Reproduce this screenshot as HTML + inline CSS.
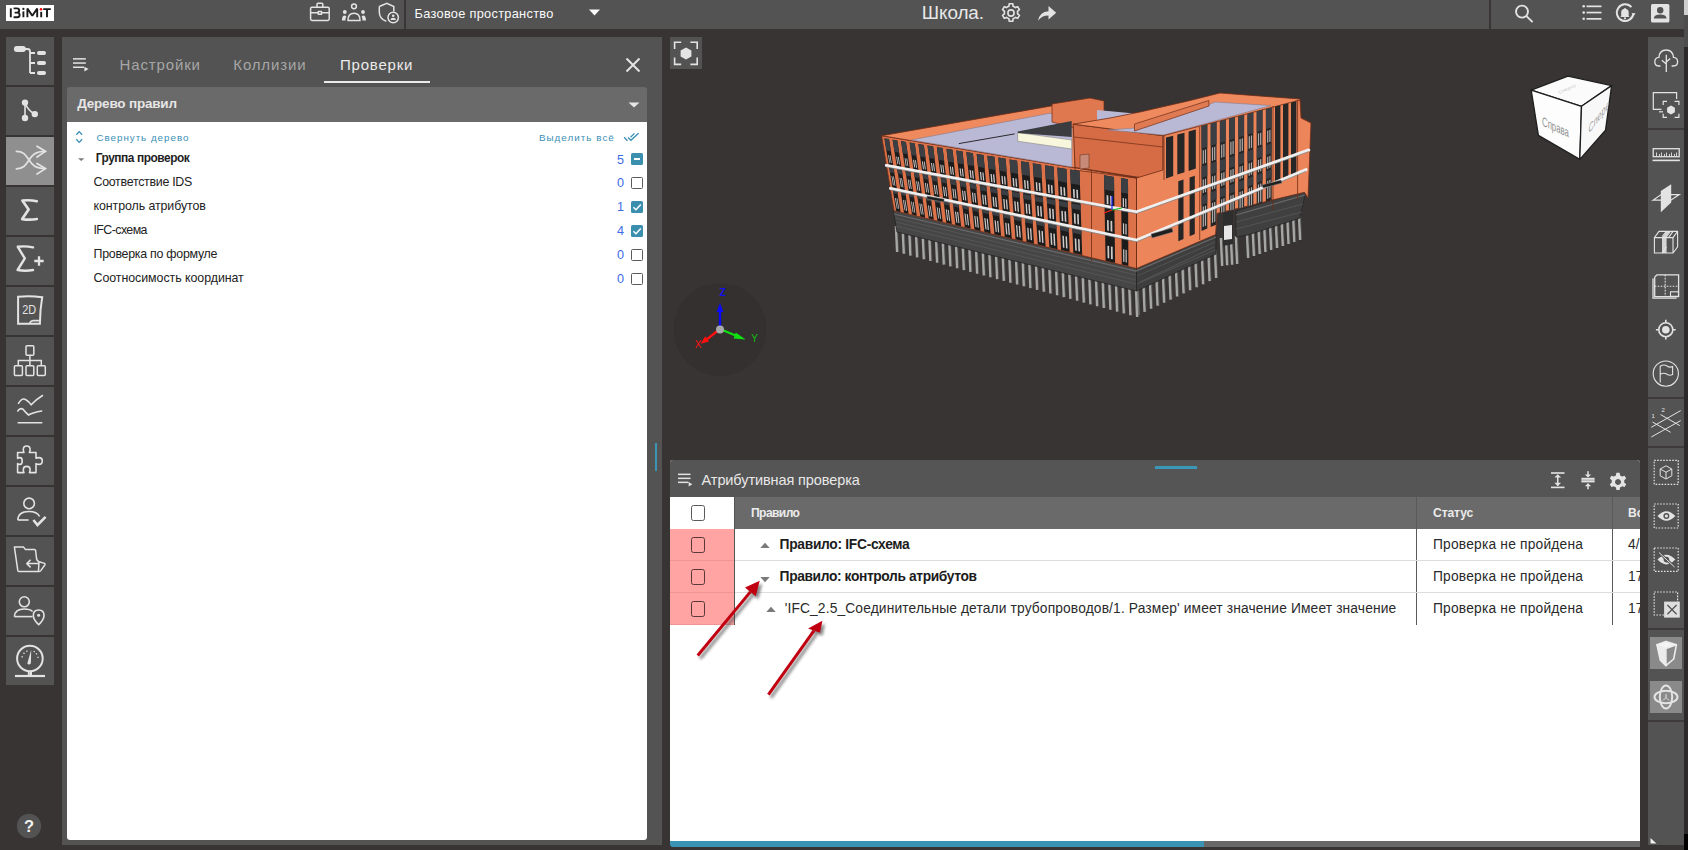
<!DOCTYPE html>
<html><head><meta charset="utf-8">
<style>
*{box-sizing:border-box;margin:0;padding:0}
html,body{width:1688px;height:850px;overflow:hidden;background:#383433;font-family:"Liberation Sans",sans-serif;position:relative}
.a{position:absolute}
.t{position:absolute;white-space:nowrap;line-height:1}
</style></head><body>
<div class="a" style="left:0px;top:0px;width:1684px;height:29px;background:#535353;"></div>
<div class="a" style="left:6px;top:5px;width:48px;height:16px;background:#fff;"></div>
<svg class="a" style="left:6px;top:5px;" width="48" height="16" viewBox="0 0 48 16"><g fill="none" stroke="#1a1a1a" stroke-width="1.9" stroke-linejoin="bevel"><path d="M4.8 3.4 V12.3"/><path d="M7.6 3.4 H10.9 Q13.2 3.4 13.2 5.6 Q13.2 7.6 11 7.6 H8.6 M8.6 7.6 H11.3 Q13.6 7.6 13.6 10 Q13.6 12.3 11.1 12.3 H7.6"/><path d="M17.4 6.4 V12.3"/><path d="M21.4 12.3 V3.4 L26.3 10.8 L31.2 3.4 V12.3"/><path d="M35.2 6.8 V12.3"/><path d="M37.2 4.1 H44.8 M41 4.1 V12.3"/></g><circle cx="17.4" cy="3.9" r="1.1" fill="#1a1a1a"/><circle cx="35" cy="4.3" r="1.25" fill="#f00"/></svg>
<svg class="a" style="left:308px;top:0px;" width="24" height="22" viewBox="0 0 24 22"><g fill="none" stroke="#e3e3e3" stroke-width="1.5" stroke-linejoin="round"><rect x="2.6" y="7.2" width="18.6" height="13.2" rx="1.4"/><path d="M9 7 V4.2 Q9 3.3 10 3.3 H13.8 Q14.8 3.3 14.8 4.2 V7"/><path d="M2.6 12.8 H10.3 M13.5 12.8 H21.2"/><rect x="10.3" y="11.6" width="3.2" height="2.6"/></g></svg>
<svg class="a" style="left:340px;top:0px;" width="28" height="22" viewBox="0 0 28 22"><g fill="#e3e3e3"><circle cx="4.8" cy="12" r="1.9"/><circle cx="23" cy="12" r="1.9"/><path d="M1.9 20.6 Q2 15.6 4.6 15.6 Q5.6 15.6 6.3 16.4 Q5.4 18 5.4 20.6Z"/><path d="M26 20.6 Q25.9 15.6 23.3 15.6 Q22.3 15.6 21.6 16.4 Q22.5 18 22.5 20.6Z"/></g><g fill="none" stroke="#e3e3e3" stroke-width="1.5"><circle cx="14" cy="6.3" r="2.4"/><path d="M8 20.5 Q8 13.3 14 13.3 Q20 13.3 20 20.5 Z"/></g></svg>
<svg class="a" style="left:376px;top:1px;" width="26" height="24" viewBox="0 0 26 24"><g fill="none" stroke="#e3e3e3" stroke-width="1.5"><path d="M3.3 5.5 L10.8 2.2 L17.8 5.5 V10.5"/><path d="M3.3 5.5 V11 Q3.3 18 10.3 20.3"/><circle cx="17.2" cy="16.5" r="5.2"/></g><g fill="#e3e3e3"><circle cx="17.2" cy="14.8" r="1.3"/><path d="M14.4 19 Q14.6 16.8 17.2 16.8 Q19.8 16.8 20 19Z"/></g></svg>
<div class="a" style="left:404px;top:0px;width:2px;height:29px;background:#3a3636;"></div>
<div class="t" style="left:414.60px;top:8.06px;font-size:12.8px;color:#fafafa;font-weight:400;letter-spacing:0.28px;">Базовое пространство</div>
<svg class="a" style="left:588px;top:8px;" width="13" height="9" viewBox="0 0 13 9"><path d="M1 1.5 H12 L6.5 7.5Z" fill="#fafafa"/></svg>
<div class="t" style="left:921.80px;top:4.00px;font-size:18.9px;color:#e8e8e8;font-weight:400;letter-spacing:-0.1px;">Школа.</div>
<svg class="a" style="left:999px;top:1px;" width="24" height="24" viewBox="0 0 24 24"><path fill="none" stroke="#e3e3e3" stroke-width="1.6" d="M10.3 2.8 h3.4 l0.5 2.5 a7 7 0 0 1 2.1 1.2 l2.4-0.8 1.7 2.9 -1.9 1.7 a7 7 0 0 1 0 2.4 l1.9 1.7 -1.7 2.9 -2.4-0.8 a7 7 0 0 1 -2.1 1.2 l-0.5 2.5 h-3.4 l-0.5-2.5 a7 7 0 0 1 -2.1-1.2 l-2.4 0.8 -1.7-2.9 1.9-1.7 a7 7 0 0 1 0-2.4 l-1.9-1.7 1.7-2.9 2.4 0.8 a7 7 0 0 1 2.1-1.2 z"/><circle cx="12" cy="12" r="3.1" fill="none" stroke="#e3e3e3" stroke-width="1.6"/></svg>
<svg class="a" style="left:1036px;top:3px;" width="22" height="20" viewBox="0 0 22 20"><path fill="#e3e3e3" d="M2 17.8 Q3.5 9 12.5 8.3 V3 L20.2 9.8 L12.5 16.6 V12.6 Q6 12.4 2 17.8Z"/></svg>
<div class="a" style="left:1489px;top:0px;width:2px;height:29px;background:#3a3636;"></div>
<svg class="a" style="left:1512px;top:2px;" width="24" height="24" viewBox="0 0 24 24"><g fill="none" stroke="#e3e3e3" stroke-width="1.9"><circle cx="10" cy="9.6" r="6"/><path d="M14.2 13.8 L20.6 20.2"/></g></svg>
<svg class="a" style="left:1580px;top:3px;" width="24" height="20" viewBox="0 0 24 20"><g fill="#e3e3e3"><circle cx="3.7" cy="3.3" r="1.3"/><circle cx="3.7" cy="9.6" r="1.3"/><circle cx="3.7" cy="15.8" r="1.3"/><rect x="6.5" y="2.5" width="15" height="1.7"/><rect x="6.5" y="8.7" width="15" height="1.7"/><rect x="6.5" y="15" width="15" height="1.7"/></g></svg>
<svg class="a" style="left:1614px;top:2px;" width="24" height="22" viewBox="0 0 24 22"><g fill="none" stroke="#e3e3e3" stroke-width="2"><path d="M19.4 11.4 A8.3 8.3 0 1 1 17.4 5.2"/></g><path fill="#e3e3e3" d="M17.5 11.2 h4.2 l-2.1 2.9z"/><path fill="#e3e3e3" d="M7.2 14.2 V10.4 Q7.2 7.3 10.3 6.7 V6 h1.3 v0.7 Q14.7 7.3 14.7 10.4 V14.2 L15.7 15.1 H6.2Z"/><circle cx="11" cy="16.3" r="1.1" fill="#e3e3e3"/></svg>
<svg class="a" style="left:1649px;top:2px;" width="22" height="22" viewBox="0 0 22 22"><rect x="2" y="2" width="18.4" height="18.6" rx="1.6" fill="#e3e3e3"/><circle cx="11.2" cy="8.2" r="3.2" fill="#535353"/><path d="M4.8 16.6 Q5 12.6 11.2 12.6 Q17.4 12.6 17.6 16.6Z" fill="#535353"/></svg>
<div class="a" style="left:1684px;top:0px;width:4px;height:15px;background:#cfcfcf;"></div>
<div class="a" style="left:1684px;top:15px;width:4px;height:32px;background:#4d4d4d;"></div>
<div class="a" style="left:1684px;top:47px;width:4px;height:787px;background:#2b2929;"></div>
<div class="a" style="left:1684px;top:834px;width:4px;height:16px;background:#000;"></div>
<div class="a" style="left:6px;top:37px;width:48px;height:48px;background:#535353;"></div>
<svg class="a" style="left:6px;top:37px;" width="48" height="48" viewBox="0 0 48 48"><rect x="7.9" y="9.1" width="12" height="6" rx="3" fill="#e3e3e3"/><path d="M19 12 H21.5 Q24 12 24 14.5 V36 M24 16 H29 M24 26 H29 M24 36 H29" fill="none" stroke="#e3e3e3" stroke-width="1.8"/><rect x="31" y="14" width="9" height="4" rx="2" fill="#e3e3e3"/><rect x="31" y="24" width="9" height="4" rx="2" fill="#e3e3e3"/><rect x="31" y="34" width="9" height="4" rx="2" fill="#e3e3e3"/></svg>
<div class="a" style="left:6px;top:87px;width:48px;height:48px;background:#535353;"></div>
<svg class="a" style="left:6px;top:87px;" width="48" height="48" viewBox="0 0 48 48"><g fill="#e3e3e3"><circle cx="19" cy="15.6" r="3.2"/><circle cx="19" cy="31" r="3.2"/><circle cx="28.8" cy="27.1" r="3.2"/></g><path d="M19 15.6 V31 M19 15.6 Q22 24 28.8 27.1" fill="none" stroke="#e3e3e3" stroke-width="1.6"/></svg>
<div class="a" style="left:6px;top:137px;width:48px;height:48px;background:#8f8f8f;"></div>
<svg class="a" style="left:6px;top:137px;" width="48" height="48" viewBox="0 0 48 48"><g fill="none" stroke="#e3e3e3" stroke-width="1.7" stroke-linecap="round"><path d="M10.4 14.3 C18 14.3 20 18.5 23 23 S29 31.6 39.2 31.6"/><path d="M10.4 31.8 C18 31.8 20 27.5 23 23 S29 14.4 39.2 14.4"/><path d="M31 9.2 L39.5 14.4 L31 20"/><path d="M31 26.4 L39.5 31.6 L31 37"/></g></svg>
<div class="a" style="left:6px;top:187px;width:48px;height:48px;background:#535353;"></div>
<svg class="a" style="left:6px;top:187px;" width="48" height="48" viewBox="0 0 48 48"><path d="M30.8 14.2 Q24 12.8 16.4 13.5 L22.6 22.6 L16.2 32.1 Q24 33.2 30.8 32" fill="none" stroke="#e3e3e3" stroke-width="2.7" stroke-linejoin="round" stroke-linecap="round"/></svg>
<div class="a" style="left:6px;top:237px;width:48px;height:48px;background:#535353;"></div>
<svg class="a" style="left:6px;top:237px;" width="48" height="48" viewBox="0 0 48 48"><path d="M27 10.4 Q19.5 8.8 11.8 9.8 L18.8 21.4 L11.6 33 Q19.5 34.4 27 33" fill="none" stroke="#e3e3e3" stroke-width="2.4" stroke-linejoin="round" stroke-linecap="round"/><path d="M33 19.3 V28.7 M28.3 24 H37.7" stroke="#e3e3e3" stroke-width="2.3"/></svg>
<div class="a" style="left:6px;top:287px;width:48px;height:48px;background:#535353;"></div>
<svg class="a" style="left:6px;top:287px;" width="48" height="48" viewBox="0 0 48 48"><path d="M12.1 9.7 Q24 8.4 36.2 10.2 Q34 23 33.9 36.7 H12.1 Z" fill="none" stroke="#e3e3e3" stroke-width="2"/><path d="M23.7 36 Q25 33.6 27 33.6 H33.6" fill="none" stroke="#e3e3e3" stroke-width="1.6"/><text x="0" y="0" font-size="12.7" fill="#e3e3e3" text-anchor="middle" font-family="Liberation Sans" transform="translate(23.1,26.8) scale(0.86,1)">2D</text></svg>
<div class="a" style="left:6px;top:337px;width:48px;height:48px;background:#535353;"></div>
<svg class="a" style="left:6px;top:337px;" width="48" height="48" viewBox="0 0 48 48"><g fill="none" stroke="#e3e3e3" stroke-width="1.5"><rect x="20" y="8.7" width="7.8" height="9.6" rx="1"/><rect x="8.4" y="28.7" width="8" height="9.8" rx="1"/><rect x="20" y="28.7" width="7.8" height="9.8" rx="1"/><rect x="31.3" y="28.7" width="8" height="9.8" rx="1"/><path d="M23.9 18.3 V28.7 M12.3 28.7 V23.5 H35.3 V28.7"/></g></svg>
<div class="a" style="left:6px;top:387px;width:48px;height:48px;background:#535353;"></div>
<svg class="a" style="left:6px;top:387px;" width="48" height="48" viewBox="0 0 48 48"><g fill="none" stroke="#e3e3e3" stroke-width="1.6" stroke-linecap="round"><path d="M12.5 16.3 Q16 10.5 19.5 12.5 Q23 14.6 25.2 17.8 Q30 12.5 36.5 8.5"/><path d="M11.8 24 Q14 20.4 17 22.2 Q20 26 22.6 28 Q27 25.4 35.7 24"/><path d="M12.2 35.7 H35.7"/></g></svg>
<div class="a" style="left:6px;top:437px;width:48px;height:48px;background:#535353;"></div>
<svg class="a" style="left:6px;top:437px;" width="48" height="48" viewBox="0 0 48 48"><path d="M11.6 15.5 H18 Q17.3 14.5 17.3 12.6 Q17.3 9 20.7 9 Q24.1 9 24.1 12.6 Q24.1 14.5 23.4 15.5 H30 V21.3 Q31 20.6 32.8 20.6 Q36.3 20.6 36.3 24 Q36.3 27.4 32.8 27.4 Q31 27.4 30 26.7 V35.6 H23.4 Q24.1 34.6 24.1 32.8 Q24.1 29.4 20.7 29.4 Q17.3 29.4 17.3 32.8 Q17.3 34.6 18 35.6 H11.6 V26.6 Q12.5 27.4 14.1 27.4 Q16.2 27.4 16.2 24 Q16.2 20.6 14.1 20.6 Q12.5 20.6 11.6 21.3Z" fill="none" stroke="#e3e3e3" stroke-width="1.6" stroke-linejoin="round"/></svg>
<div class="a" style="left:6px;top:487px;width:48px;height:48px;background:#535353;"></div>
<svg class="a" style="left:6px;top:487px;" width="48" height="48" viewBox="0 0 48 48"><g fill="none" stroke="#e3e3e3" stroke-width="1.6"><circle cx="23.1" cy="16.4" r="5.3"/><path d="M11.8 33 Q12.2 24.5 23 24.5 Q31 24.5 33.6 29.5"/><path d="M11.8 33 H22.6"/></g><path d="M27.4 33 L31.5 38 L39.6 29.8" fill="none" stroke="#e3e3e3" stroke-width="2.6"/></svg>
<div class="a" style="left:6px;top:537px;width:48px;height:48px;background:#535353;"></div>
<svg class="a" style="left:6px;top:537px;" width="48" height="48" viewBox="0 0 48 48"><g fill="none" stroke="#e3e3e3" stroke-width="1.5" stroke-linejoin="round"><path d="M8.4 10.1 H17.6 L19.3 12.4 H28.4 Q29.5 12.4 29.6 13.5 L30.6 22 Q31 24 33 24.8 L38.6 26.4 Q39.4 27 38.8 28 L34.8 33.6 Q34 34.6 32.6 34.6 H13.2 Q12.2 34.6 11.8 33.4 Z"/><path d="M33 24.8 L32.4 34.4"/><path d="M33 26.6 H21 M24.6 22.8 L20.8 26.6 L24.6 30.4"/></g></svg>
<div class="a" style="left:6px;top:587px;width:48px;height:48px;background:#535353;"></div>
<svg class="a" style="left:6px;top:587px;" width="48" height="48" viewBox="0 0 48 48"><g fill="none" stroke="#e3e3e3" stroke-width="1.6"><circle cx="18.3" cy="14.8" r="5"/><path d="M8.4 29.6 Q8.8 22 18.3 22 Q24 22 26.6 24.5"/><path d="M8.4 29.6 H26.5"/><path d="M32.7 37.6 Q27.3 32.5 27.3 28.4 Q27.3 23 32.7 23 Q38 23 38 28.4 Q38 32.5 32.7 37.6Z"/></g><circle cx="32.6" cy="28.2" r="1.5" fill="#e3e3e3"/></svg>
<div class="a" style="left:6px;top:637px;width:48px;height:48px;background:#535353;"></div>
<svg class="a" style="left:6px;top:637px;" width="48" height="48" viewBox="0 0 48 48"><g fill="none" stroke="#e3e3e3" stroke-width="2"><circle cx="23.9" cy="21.5" r="12.8"/><path d="M9 39 H39" stroke-width="2.2"/><path d="M22.8 34.3 V38 M25 34.3 V38"/></g><path d="M21.3 26.4 Q23 28.7 24.9 26.2 L25.2 12.8 Z" fill="#e3e3e3"/><g stroke="#e3e3e3" stroke-width="1.3"><path d="M15.5 19.5 l1.3 0.6 M17.5 15.8 l1 1 M20.6 13.6 l0.6 1.2 M28.5 14 l-0.7 1.1 M31 16.4 l-1 0.8 M32.7 20 l-1.3 0.5"/></g></svg>
<svg class="a" style="left:16px;top:813px;" width="26" height="26" viewBox="0 0 26 26"><circle cx="13" cy="13" r="12.2" fill="#535353"/><text x="13" y="18.6" font-size="16.5" font-weight="bold" fill="#f2f2f2" text-anchor="middle" font-family="Liberation Sans">?</text></svg>
<div class="a" style="left:62px;top:37px;width:600px;height:808px;background:#535353;"></div>
<svg class="a" style="left:70px;top:54px;" width="22" height="20" viewBox="0 0 22 20"><g fill="#e3e3e3"><rect x="3" y="4.1" width="12.8" height="1.5"/><rect x="3" y="8.3" width="12.8" height="1.5"/><rect x="3" y="12.5" width="11" height="1.5"/><path d="M14.4 12.7 L18.6 15.1 L14.4 17.5Z"/></g></svg>
<div class="t" style="left:119.60px;top:57.00px;font-size:15px;color:#a6a6a6;font-weight:400;letter-spacing:0.85px;">Настройки</div>
<div class="t" style="left:233.30px;top:57.00px;font-size:15px;color:#a6a6a6;font-weight:400;letter-spacing:0.85px;">Коллизии</div>
<div class="t" style="left:340.00px;top:57.00px;font-size:15px;color:#ebebeb;font-weight:400;letter-spacing:0.8px;">Проверки</div>
<div class="a" style="left:324px;top:81px;width:106px;height:2.4px;background:#ebebeb;"></div>
<svg class="a" style="left:624px;top:56px;" width="18" height="18" viewBox="0 0 18 18"><path d="M2.5 2.5 L15.5 15.5 M15.5 2.5 L2.5 15.5" stroke="#e3e3e3" stroke-width="2"/></svg>
<div class="a" style="left:67px;top:87px;width:580px;height:35px;background:#6a6a6a;border-radius:3px 3px 0 0;"></div>
<div class="t" style="left:77.20px;top:96.97px;font-size:13.5px;color:#e6e6e6;font-weight:700;letter-spacing:-0.2px;">Дерево правил</div>
<svg class="a" style="left:627px;top:101px;" width="14" height="8" viewBox="0 0 14 8"><path d="M1.5 1.5 H12.5 L7 6.5Z" fill="#e6e6e6"/></svg>
<div class="a" style="left:67px;top:122px;width:580px;height:718px;background:#fff;border-radius:0 0 3px 3px;"></div>
<svg class="a" style="left:72px;top:128px;" width="14" height="18" viewBox="0 0 14 18"><path d="M4.3 6.8 L7.2 3.6 L10.1 6.8 M4.3 11.2 L7.2 14.4 L10.1 11.2" fill="none" stroke="#3a8fb5" stroke-width="1.3"/></svg>
<div class="t" style="left:96.40px;top:132.50px;font-size:9.8px;color:#3a8fb5;font-weight:400;letter-spacing:0.98px;">Свернуть дерево</div>
<div class="t" style="left:538.90px;top:132.50px;font-size:9.8px;color:#3a8fb5;font-weight:400;letter-spacing:1.05px;">Выделить всё</div>
<svg class="a" style="left:622px;top:131px;" width="18" height="12" viewBox="0 0 18 12"><path d="M2.1 6.3 L5.5 9.7 M6 6.5 L8.9 9.3 L16.6 2.3 M8.5 6.3 L12.5 2.4" fill="none" stroke="#3a8fb5" stroke-width="1.3"/></svg>
<svg class="a" style="left:76px;top:155px;" width="10" height="8" viewBox="0 0 10 8"><path d="M2 3.2 H8.4 L5.2 6Z" fill="#7a7a7a"/></svg>
<div class="t" style="left:95.70px;top:153.13px;font-size:11.9px;color:#1e1e1e;font-weight:700;letter-spacing:-0.44px;">Группа проверок</div>
<div class="t" style="left:617.00px;top:153.63px;font-size:12.6px;color:#3d6be6;font-weight:400;letter-spacing:0px;">5</div>
<div class="a" style="left:631px;top:153px;width:12px;height:12px;background:#3a8fae;border-radius:1.5px;"></div>
<div class="a" style="left:633.8px;top:158px;width:6.7px;height:2.2px;background:#fff;"></div>
<div class="t" style="left:93.50px;top:175.50px;font-size:12.4px;color:#222;font-weight:400;letter-spacing:-0.28px;">Соответствие IDS</div>
<div class="t" style="left:617.00px;top:177.33px;font-size:12.6px;color:#3d6be6;font-weight:400;letter-spacing:0px;">0</div>
<div class="a" style="left:631px;top:177px;width:12px;height:12px;background:#fff;border:1.4px solid #5a5a5a;border-radius:1.5px;"></div>
<div class="t" style="left:93.50px;top:199.50px;font-size:12.4px;color:#222;font-weight:400;letter-spacing:-0.08px;">контроль атрибутов</div>
<div class="t" style="left:617.00px;top:201.33px;font-size:12.6px;color:#3d6be6;font-weight:400;letter-spacing:0px;">1</div>
<div class="a" style="left:631px;top:201px;width:12px;height:12px;background:#3a8fae;border-radius:1.5px;"></div>
<svg class="a" style="left:631px;top:201px;" width="12" height="12" viewBox="0 0 12 12"><path d="M2.4 6.2 L4.9 8.7 L9.8 3.6" fill="none" stroke="#fff" stroke-width="1.5"/></svg>
<div class="t" style="left:93.50px;top:223.50px;font-size:12.4px;color:#222;font-weight:400;letter-spacing:-0.58px;">IFC-схема</div>
<div class="t" style="left:617.00px;top:225.33px;font-size:12.6px;color:#3d6be6;font-weight:400;letter-spacing:0px;">4</div>
<div class="a" style="left:631px;top:225px;width:12px;height:12px;background:#3a8fae;border-radius:1.5px;"></div>
<svg class="a" style="left:631px;top:225px;" width="12" height="12" viewBox="0 0 12 12"><path d="M2.4 6.2 L4.9 8.7 L9.8 3.6" fill="none" stroke="#fff" stroke-width="1.5"/></svg>
<div class="t" style="left:93.50px;top:247.50px;font-size:12.4px;color:#222;font-weight:400;letter-spacing:-0.26px;">Проверка по формуле</div>
<div class="t" style="left:617.00px;top:249.33px;font-size:12.6px;color:#3d6be6;font-weight:400;letter-spacing:0px;">0</div>
<div class="a" style="left:631px;top:249px;width:12px;height:12px;background:#fff;border:1.4px solid #5a5a5a;border-radius:1.5px;"></div>
<div class="t" style="left:93.50px;top:271.50px;font-size:12.4px;color:#222;font-weight:400;letter-spacing:-0.05px;">Соотносимость координат</div>
<div class="t" style="left:617.00px;top:273.33px;font-size:12.6px;color:#3d6be6;font-weight:400;letter-spacing:0px;">0</div>
<div class="a" style="left:631px;top:273px;width:12px;height:12px;background:#fff;border:1.4px solid #5a5a5a;border-radius:1.5px;"></div>
<div class="a" style="left:655px;top:443px;width:2px;height:28px;background:#3a95b3;"></div>
<div class="a" style="left:670px;top:37px;width:32px;height:32px;background:#535353;"></div>
<svg class="a" style="left:670px;top:37px;" width="32" height="32" viewBox="0 0 32 32"><g fill="none" stroke="#e3e3e3" stroke-width="1.6"><path d="M4.6 12 V5.2 H11.2 M20.4 5.2 H27.2 V12 M27.2 20.6 V27.4 H20.4 M11.2 27.4 H4.6 V20.6"/></g><path d="M16 10.4 L21.4 13.4 V19.4 L16 22.5 L10.6 19.4 V13.4Z" fill="#e3e3e3"/></svg>
<svg class="a" style="left:672px;top:282px;" width="96" height="96" viewBox="0 0 96 96"><circle cx="48" cy="47.5" r="46.3" fill="#33302f"/><path d="M48 47 V28" stroke="#0a0aff" stroke-width="2.4"/><path d="M44.6 30 L48 21 L51.4 30Z" fill="#0a0aff"/><text x="50.6" y="14.2" font-size="10.5" font-weight="bold" fill="#1010ee" text-anchor="middle" font-family="Liberation Sans">Z</text><path d="M48 47 L66 54.5" stroke="#10e010" stroke-width="2.2"/><path d="M63.8 50.4 L73.6 57.6 L61.6 56.4Z" fill="#10e010"/><text x="82.6" y="60" font-size="10" fill="#10c010" text-anchor="middle" font-family="Liberation Sans">Y</text><path d="M48 47 L34 58" stroke="#ff1010" stroke-width="2.4"/><path d="M33.2 54.2 L28.6 61.8 L37 59.4Z" fill="#ff1010"/><text x="26" y="65.6" font-size="10" fill="#ff1010" text-anchor="middle" font-family="Liberation Sans">X</text><circle cx="48" cy="47.4" r="4" fill="#a8a8a8"/></svg>
<svg class="a" style="left:1520px;top:70px;" width="100" height="100" viewBox="0 0 100 100"><defs><clipPath id="cf1"><path d="M11.2 20.1 L61.5 36.3 L59.8 89.4 L18.4 65.4Z"/></clipPath><clipPath id="cf2"><path d="M61.5 36.3 L91.6 15.6 L85.5 60.3 L59.8 89.4Z"/></clipPath></defs><g stroke="#1e1e1e" stroke-width="1.3" stroke-linejoin="round"><path d="M11.2 20.1 L48 6.1 L91.6 15.6 L61.5 36.3Z" fill="#fbfbfb"/><path d="M11.2 20.1 L61.5 36.3 L59.8 89.4 L18.4 65.4Z" fill="#fdfdfd"/><path d="M61.5 36.3 L91.6 15.6 L85.5 60.3 L59.8 89.4Z" fill="#f8f8f8"/></g><g clip-path="url(#cf1)"><text x="0" y="0" font-size="13" fill="#909090" font-family="Liberation Sans" transform="translate(22,55.5) skewY(24) scale(0.6,1)">Справа</text></g><g clip-path="url(#cf2)"><text x="0" y="0" font-size="12" fill="#a0a0a0" font-family="Liberation Sans" transform="translate(68.5,64) skewY(-52) scale(0.6,1)" >Спереди</text></g><text x="0" y="0" font-size="7" fill="#c8c8c8" font-family="Liberation Sans" transform="translate(39,24) rotate(-24) scale(0.8,0.6)">Сверху</text></svg>
<svg class="a" style="left:0;top:0" width="1688" height="850"><g stroke="#a6a6a6" stroke-width="2.6" fill="none"><path d="M896.0 226.0 L897.2 252.0" /><path d="M902.7 227.7 L903.9 253.8" /><path d="M909.3 229.4 L910.5 255.6" /><path d="M916.0 231.1 L917.2 257.4" /><path d="M922.7 232.8 L923.9 259.2" /><path d="M929.3 234.5 L930.5 261.0" /><path d="M936.0 236.2 L937.2 262.8" /><path d="M942.7 237.9 L943.9 264.6" /><path d="M949.3 239.6 L950.5 266.4" /><path d="M956.0 241.2 L957.2 268.2" /><path d="M962.7 242.9 L963.9 270.1" /><path d="M969.3 244.6 L970.5 271.9" /><path d="M976.0 246.3 L977.2 273.7" /><path d="M982.7 248.0 L983.9 275.5" /><path d="M989.3 249.7 L990.5 277.3" /><path d="M996.0 251.4 L997.2 279.1" /><path d="M1002.7 253.1 L1003.9 280.9" /><path d="M1009.3 254.8 L1010.5 282.7" /><path d="M1016.0 256.5 L1017.2 284.5" /><path d="M1022.7 258.2 L1023.9 286.3" /><path d="M1029.3 259.9 L1030.5 288.1" /><path d="M1036.0 261.6 L1037.2 289.9" /><path d="M1042.7 263.3 L1043.9 291.7" /><path d="M1049.3 265.0 L1050.5 293.5" /><path d="M1056.0 266.7 L1057.2 295.3" /><path d="M1062.7 268.4 L1063.9 297.1" /><path d="M1069.3 270.1 L1070.5 298.9" /><path d="M1076.0 271.8 L1077.2 300.8" /><path d="M1082.7 273.4 L1083.9 302.6" /><path d="M1089.3 275.1 L1090.5 304.4" /><path d="M1096.0 276.8 L1097.2 306.2" /><path d="M1102.7 278.5 L1103.9 308.0" /><path d="M1109.3 280.2 L1110.5 309.8" /><path d="M1116.0 281.9 L1117.2 311.6" /><path d="M1122.7 283.6 L1123.9 313.4" /><path d="M1129.3 285.3 L1130.5 315.2" /><path d="M1136.0 287.0 L1137.2 317.0" /><path d="M1137.0 287.0 L1138.2 315.0" /><path d="M1143.5 283.9 L1144.7 311.9" /><path d="M1150.0 280.8 L1151.2 308.8" /><path d="M1156.5 277.8 L1157.7 305.8" /><path d="M1163.0 274.7 L1164.2 302.7" /><path d="M1169.5 271.6 L1170.7 299.6" /><path d="M1176.0 268.5 L1177.2 296.5" /><path d="M1182.5 265.4 L1183.7 293.4" /><path d="M1189.0 262.3 L1190.2 290.3" /><path d="M1195.5 259.2 L1196.7 287.2" /><path d="M1202.0 256.2 L1203.2 284.2" /><path d="M1208.5 253.1 L1209.7 281.1" /><path d="M1215.0 250.0 L1216.2 278.0" /><path d="M1247.0 232.0 L1248.2 258.0" /><path d="M1252.8 230.0 L1254.0 256.0" /><path d="M1258.6 228.0 L1259.8 254.0" /><path d="M1264.3 226.0 L1265.5 252.0" /><path d="M1270.1 224.0 L1271.3 250.0" /><path d="M1275.9 222.0 L1277.1 248.0" /><path d="M1281.7 220.0 L1282.9 246.0" /><path d="M1287.4 218.0 L1288.6 244.0" /><path d="M1293.2 216.0 L1294.4 242.0" /><path d="M1299.0 214.0 L1300.2 240.0" /><path d="M1221.0 238.0 L1222.2 266.0" /><path d="M1226.0 237.3 L1227.2 265.3" /><path d="M1231.0 236.7 L1232.2 264.7" /><path d="M1236.0 236.0 L1237.2 264.0" /></g><g stroke="#555" stroke-width="0.7" fill="none" transform="translate(1.5,0)"><path d="M896.0 226.0 L897.2 252.0" /><path d="M902.7 227.7 L903.9 253.8" /><path d="M909.3 229.4 L910.5 255.6" /><path d="M916.0 231.1 L917.2 257.4" /><path d="M922.7 232.8 L923.9 259.2" /><path d="M929.3 234.5 L930.5 261.0" /><path d="M936.0 236.2 L937.2 262.8" /><path d="M942.7 237.9 L943.9 264.6" /><path d="M949.3 239.6 L950.5 266.4" /><path d="M956.0 241.2 L957.2 268.2" /><path d="M962.7 242.9 L963.9 270.1" /><path d="M969.3 244.6 L970.5 271.9" /><path d="M976.0 246.3 L977.2 273.7" /><path d="M982.7 248.0 L983.9 275.5" /><path d="M989.3 249.7 L990.5 277.3" /><path d="M996.0 251.4 L997.2 279.1" /><path d="M1002.7 253.1 L1003.9 280.9" /><path d="M1009.3 254.8 L1010.5 282.7" /><path d="M1016.0 256.5 L1017.2 284.5" /><path d="M1022.7 258.2 L1023.9 286.3" /><path d="M1029.3 259.9 L1030.5 288.1" /><path d="M1036.0 261.6 L1037.2 289.9" /><path d="M1042.7 263.3 L1043.9 291.7" /><path d="M1049.3 265.0 L1050.5 293.5" /><path d="M1056.0 266.7 L1057.2 295.3" /><path d="M1062.7 268.4 L1063.9 297.1" /><path d="M1069.3 270.1 L1070.5 298.9" /><path d="M1076.0 271.8 L1077.2 300.8" /><path d="M1082.7 273.4 L1083.9 302.6" /><path d="M1089.3 275.1 L1090.5 304.4" /><path d="M1096.0 276.8 L1097.2 306.2" /><path d="M1102.7 278.5 L1103.9 308.0" /><path d="M1109.3 280.2 L1110.5 309.8" /><path d="M1116.0 281.9 L1117.2 311.6" /><path d="M1122.7 283.6 L1123.9 313.4" /><path d="M1129.3 285.3 L1130.5 315.2" /><path d="M1136.0 287.0 L1137.2 317.0" /><path d="M1137.0 287.0 L1138.2 315.0" /><path d="M1143.5 283.9 L1144.7 311.9" /><path d="M1150.0 280.8 L1151.2 308.8" /><path d="M1156.5 277.8 L1157.7 305.8" /><path d="M1163.0 274.7 L1164.2 302.7" /><path d="M1169.5 271.6 L1170.7 299.6" /><path d="M1176.0 268.5 L1177.2 296.5" /><path d="M1182.5 265.4 L1183.7 293.4" /><path d="M1189.0 262.3 L1190.2 290.3" /><path d="M1195.5 259.2 L1196.7 287.2" /><path d="M1202.0 256.2 L1203.2 284.2" /><path d="M1208.5 253.1 L1209.7 281.1" /><path d="M1215.0 250.0 L1216.2 278.0" /><path d="M1247.0 232.0 L1248.2 258.0" /><path d="M1252.8 230.0 L1254.0 256.0" /><path d="M1258.6 228.0 L1259.8 254.0" /><path d="M1264.3 226.0 L1265.5 252.0" /><path d="M1270.1 224.0 L1271.3 250.0" /><path d="M1275.9 222.0 L1277.1 248.0" /><path d="M1281.7 220.0 L1282.9 246.0" /><path d="M1287.4 218.0 L1288.6 244.0" /><path d="M1293.2 216.0 L1294.4 242.0" /><path d="M1299.0 214.0 L1300.2 240.0" /><path d="M1221.0 238.0 L1222.2 266.0" /><path d="M1226.0 237.3 L1227.2 265.3" /><path d="M1231.0 236.7 L1232.2 264.7" /><path d="M1236.0 236.0 L1237.2 264.0" /></g><polygon points="893.0,209.0 1136.5,266.0 1136.5,291.0 897.0,232.0" fill="#464646" stroke="#262626" stroke-width="0.8"/><polygon points="1136.5,266.0 1216.0,232.0 1216.0,254.0 1136.5,291.0" fill="#3e3e3e" stroke="#262626" stroke-width="0.8"/><polygon points="1236.0,211.0 1306.0,190.0 1300.0,218.0 1248.0,235.0 1236.0,237.0" fill="#404040" stroke="#262626" stroke-width="0.8"/><path d="M894 214 L1136 271 L1216 237 M1236 215 L1305 195" stroke="#6a6a6a" stroke-width="1.2" fill="none"/><path d="M896 222 L1136 280 M1140 282 L1214 247" stroke="#555" stroke-width="1" fill="none"/><g stroke="#5c5c5c" stroke-width="0.7" fill="none"><path d="M895 218 L1136 275"/><path d="M896 226 L1136 284"/><path d="M1137 276 L1215 242"/><path d="M1137 284 L1215 250"/><path d="M1236 222 L1303 204"/><path d="M1236 229 L1302 212"/></g><polygon points="1223,212 1233,210 1233,244 1223,246" fill="#2e2e2e"/><polygon points="1224,226 1232,225 1232,239 1224,240" fill="#e6e6e6"/><polygon points="881.6,135.7 1136.5,178.0 1136.5,268.5 894.0,210.7" fill="#dc7249" stroke="#6e2c16" stroke-width="0.8"/><polygon points="881.6,135.7 1051.0,106.0 1075.0,110.0 1075.0,170.0 1136.5,178.0" fill="#ef8a5e" stroke="#6e2c16" stroke-width="0.8"/><polygon points="911.4,140.0 1050.0,113.2 1072.0,121.7 1072.0,167.0" fill="#b9b9d6" stroke="#8a7a8a" stroke-width="0.6"/><polygon points="1052,104 1090,98 1104,101 1104,124 1075,128 1052,122" fill="#df784f" stroke="#6e2c16" stroke-width="0.7"/><polygon points="1097,110 1140,114 1140,124 1097,121" fill="#b9b9d6"/><polygon points="1017.7,132.6 1071.7,140 1071.7,149 1017.7,141.2" fill="#f8f6dc" stroke="#777" stroke-width="0.5"/><polygon points="1017.7,131.4 1071.7,121.1 1071.7,137 1017.7,133" fill="#3a3c40"/><path d="M958.8 143.6 L1014.7 133.9" stroke="#1a1a1a" stroke-width="0.9"/><polygon points="1073.2,124.2 1163.1,135.7 1163.1,179.7 1136.5,177.0 1075.0,167.5" fill="#d56c45" stroke="#6e2c16" stroke-width="0.9"/><path d="M1074 137 L1163 147" stroke="#7a3219" stroke-width="0.8"/><polygon points="1080,155 1089,154 1089,168 1080,169" fill="#c88a78" stroke="#5a2a1a" stroke-width="0.5"/><polygon points="1073.2,124.2 1110.0,118.0 1140.0,112.0 1188.0,101.0 1220.0,93.0 1300.0,99.0 1301.0,118.0 1311.0,123.0 1163.1,135.7" fill="#ef8a5e" stroke="#6e2c16" stroke-width="0.8"/><polygon points="1108.0,130.0 1135.0,128.0 1208.0,105.0 1215.0,102.0 1271.0,105.5 1164.0,135.0" fill="#b9b9d6" stroke="#8a7a8a" stroke-width="0.6"/><path d="M1134.5 124 L1208.8 100.5 L1209 106 L1134.5 131Z" fill="#e07a52" stroke="#6e2c16" stroke-width="0.7"/><clipPath id="rfc"><polygon points="1136.5,178.0 1163.1,170.0 1163.1,135.7 1300.0,100.0 1301.0,118.0 1311.0,123.0 1308.0,198.0 1304.5,192.3 1217.0,213.4 1215.6,234.6 1136.5,268.5"/></clipPath><polygon points="1136.5,178.0 1163.1,170.0 1163.1,135.7 1300.0,100.0 1301.0,118.0 1311.0,123.0 1308.0,198.0 1304.5,192.3 1217.0,213.4 1215.6,234.6 1136.5,268.5" fill="#ec855a" stroke="#6e2c16" stroke-width="0.8"/><g fill="#1c1c1c"><polygon points="884.4,138.4 889.0,139.1 900.6,211.9 896.2,210.9"/><polygon points="892.6,139.7 897.3,140.5 908.6,213.8 904.0,212.7"/><polygon points="901.0,141.1 905.9,142.0 916.8,215.8 912.0,214.6"/><polygon points="909.6,142.6 914.7,143.5 925.2,217.8 920.3,216.6"/><polygon points="918.4,144.1 923.8,145.0 933.8,219.8 928.7,218.6"/><polygon points="927.5,145.6 933.1,146.5 942.7,221.9 937.4,220.7"/><polygon points="936.9,147.2 942.6,148.1 951.8,224.1 946.3,222.8"/><polygon points="946.5,148.8 952.5,149.8 961.1,226.3 955.4,224.9"/><polygon points="956.3,150.4 962.5,151.5 970.7,228.6 964.8,227.2"/><polygon points="966.4,152.1 972.9,153.2 980.6,230.9 974.4,229.5"/><polygon points="976.7,153.9 983.5,155.0 990.7,233.4 984.3,231.8"/><polygon points="987.4,155.7 994.4,156.8 1001.1,235.8 994.4,234.2"/><polygon points="998.3,157.5 1005.6,158.7 1011.8,238.4 1004.8,236.7"/><polygon points="1009.5,159.4 1017.1,160.7 1022.8,241.0 1015.5,239.3"/><polygon points="1021.0,161.3 1029.0,162.6 1034.0,243.7 1026.5,241.9"/><polygon points="1032.8,163.3 1041.1,164.7 1045.6,246.4 1037.7,244.5"/><polygon points="1045.0,165.3 1053.6,166.8 1057.5,249.2 1049.3,247.3"/><polygon points="1057.4,167.4 1066.4,168.9 1069.7,252.1 1061.1,250.1"/><polygon points="1070.2,169.6 1079.5,171.1 1082.2,255.1 1073.3,253.0"/><polygon points="1104.0,175.3 1114.0,176.9 1115.1,263.0 1105.6,260.7"/><polygon points="1121.0,178.1 1128.0,179.3 1128.4,266.1 1121.8,264.5"/></g><g fill="#3b3e42"><polygon points="884.4,138.4 889.0,139.1 890.9,151.2 886.3,150.4"/><polygon points="889.2,167.7 893.7,168.5 894.4,173.1 889.9,172.2"/><polygon points="892.7,189.5 897.2,190.4 897.8,194.2 893.3,193.2"/><polygon points="892.6,139.7 897.3,140.5 899.2,152.7 894.5,151.8"/><polygon points="897.2,169.2 901.9,170.1 902.6,174.7 897.9,173.8"/><polygon points="900.6,191.2 905.2,192.2 905.8,196.0 901.2,194.9"/><polygon points="901.0,141.1 905.9,142.0 907.7,154.2 902.8,153.3"/><polygon points="905.4,170.8 910.3,171.8 911.0,176.4 906.1,175.4"/><polygon points="908.8,192.9 913.5,194.0 914.1,197.8 909.3,196.7"/><polygon points="909.6,142.6 914.7,143.5 916.5,155.8 911.4,154.9"/><polygon points="913.9,172.5 918.9,173.5 919.6,178.1 914.6,177.1"/><polygon points="917.1,194.7 922.1,195.8 922.6,199.7 917.7,198.6"/><polygon points="918.4,144.1 923.8,145.0 925.5,157.4 920.1,156.4"/><polygon points="922.6,174.2 927.8,175.2 928.5,179.9 923.2,178.8"/><polygon points="925.7,196.6 930.8,197.7 931.4,201.6 926.2,200.4"/><polygon points="927.5,145.6 933.1,146.5 934.7,159.0 929.2,158.1"/><polygon points="931.5,175.9 937.0,177.0 937.6,181.7 932.1,180.6"/><polygon points="934.5,198.5 939.8,199.7 940.3,203.6 935.0,202.4"/><polygon points="936.9,147.2 942.6,148.1 944.2,160.7 938.4,159.7"/><polygon points="940.7,177.7 946.3,178.8 946.9,183.6 941.2,182.4"/><polygon points="943.5,200.4 949.1,201.7 949.5,205.6 944.0,204.4"/><polygon points="946.5,148.8 952.5,149.8 953.9,162.5 947.9,161.4"/><polygon points="950.1,179.6 956.0,180.7 956.5,185.5 950.6,184.3"/><polygon points="952.7,202.5 958.6,203.7 959.0,207.7 953.2,206.4"/><polygon points="956.3,150.4 962.5,151.5 963.9,164.3 957.7,163.2"/><polygon points="959.7,181.5 965.8,182.6 966.4,187.4 960.2,186.2"/><polygon points="962.3,204.5 968.3,205.8 968.7,209.8 962.7,208.5"/><polygon points="966.4,152.1 972.9,153.2 974.2,166.1 967.7,165.0"/><polygon points="969.6,183.4 976.0,184.6 976.5,189.5 970.1,188.2"/><polygon points="972.0,206.6 978.3,208.0 978.7,212.0 972.4,210.6"/><polygon points="976.7,153.9 983.5,155.0 984.7,168.0 978.0,166.8"/><polygon points="979.8,185.4 986.4,186.7 986.9,191.5 980.3,190.2"/><polygon points="982.0,208.8 988.6,210.2 989.0,214.3 982.4,212.8"/><polygon points="987.4,155.7 994.4,156.8 995.5,169.9 988.6,168.7"/><polygon points="990.2,187.4 997.1,188.8 997.5,193.7 990.7,192.3"/><polygon points="992.3,211.0 999.1,212.5 999.5,216.6 992.7,215.1"/><polygon points="998.3,157.5 1005.6,158.7 1006.7,171.9 999.4,170.6"/><polygon points="1000.9,189.5 1008.1,190.9 1008.5,195.9 1001.3,194.4"/><polygon points="1002.9,213.3 1010.0,214.8 1010.3,219.0 1003.2,217.4"/><polygon points="1009.5,159.4 1017.1,160.7 1018.1,174.0 1010.5,172.6"/><polygon points="1011.9,191.7 1019.4,193.1 1019.8,198.1 1012.3,196.6"/><polygon points="1013.7,215.7 1021.1,217.3 1021.4,221.4 1014.0,219.8"/><polygon points="1021.0,161.3 1029.0,162.6 1029.8,176.1 1021.9,174.7"/><polygon points="1023.2,193.9 1031.0,195.4 1031.3,200.4 1023.6,198.9"/><polygon points="1024.9,218.1 1032.5,219.7 1032.8,223.9 1025.1,222.2"/><polygon points="1032.8,163.3 1041.1,164.7 1041.8,178.2 1033.7,176.8"/><polygon points="1034.8,196.1 1042.9,197.7 1043.2,202.8 1035.1,201.2"/><polygon points="1036.3,220.5 1044.3,222.3 1044.5,226.5 1036.5,224.8"/><polygon points="1045.0,165.3 1053.6,166.8 1054.2,180.5 1045.7,178.9"/><polygon points="1046.7,198.5 1055.2,200.1 1055.4,205.2 1047.0,203.6"/><polygon points="1048.0,223.1 1056.3,224.9 1056.5,229.2 1048.2,227.3"/><polygon points="1057.4,167.4 1066.4,168.9 1066.9,182.7 1058.0,181.1"/><polygon points="1058.9,200.8 1067.7,202.6 1067.9,207.7 1059.2,206.0"/><polygon points="1060.0,225.7 1068.7,227.6 1068.9,231.9 1060.2,230.0"/><polygon points="1070.2,169.6 1079.5,171.1 1080.0,185.1 1070.7,183.4"/><polygon points="1071.5,203.3 1080.6,205.1 1080.8,210.3 1071.7,208.5"/><polygon points="1072.4,228.4 1081.4,230.3 1081.6,234.7 1072.6,232.7"/><polygon points="1104.0,175.3 1114.0,176.9 1114.2,191.2 1104.3,189.4"/><polygon points="1121.0,178.1 1128.0,179.3 1128.1,193.7 1121.1,192.4"/></g><g fill="#cfcaca"><polygon points="888.1,155.1 888.9,155.2 890.1,162.7 889.3,162.6"/><polygon points="889.7,155.4 890.5,155.5 891.7,163.1 890.9,162.9"/><polygon points="891.5,176.1 892.3,176.3 893.8,185.3 893.0,185.2"/><polygon points="893.1,176.5 893.9,176.6 895.4,185.7 894.6,185.5"/><polygon points="895.0,197.9 895.8,198.1 897.5,208.7 896.8,208.5"/><polygon points="896.6,198.3 897.4,198.5 899.1,209.0 898.3,208.8"/><polygon points="896.2,156.6 897.1,156.7 898.2,164.3 897.4,164.1"/><polygon points="897.9,156.9 898.8,157.0 899.9,164.6 899.1,164.5"/><polygon points="899.5,177.8 900.4,177.9 901.8,187.0 900.9,186.8"/><polygon points="901.2,178.1 902.0,178.3 903.4,187.4 902.6,187.2"/><polygon points="903.0,199.7 903.8,199.9 905.4,210.5 904.6,210.3"/><polygon points="904.6,200.1 905.4,200.3 907.1,210.9 906.2,210.7"/><polygon points="904.6,158.1 905.4,158.3 906.6,165.9 905.7,165.7"/><polygon points="906.3,158.4 907.2,158.6 908.3,166.2 907.5,166.0"/><polygon points="907.8,179.4 908.6,179.6 910.0,188.8 909.1,188.6"/><polygon points="909.5,179.8 910.4,180.0 911.7,189.1 910.9,188.9"/><polygon points="911.1,201.5 911.9,201.7 913.5,212.4 912.7,212.2"/><polygon points="912.8,201.9 913.6,202.1 915.2,212.8 914.4,212.6"/><polygon points="913.1,159.7 914.1,159.8 915.2,167.5 914.2,167.3"/><polygon points="915.0,160.0 915.9,160.2 917.0,167.9 916.1,167.7"/><polygon points="916.2,181.2 917.1,181.3 918.4,190.6 917.5,190.4"/><polygon points="918.0,181.5 918.9,181.7 920.2,190.9 919.3,190.7"/><polygon points="919.4,203.4 920.3,203.6 921.8,214.4 921.0,214.2"/><polygon points="921.2,203.8 922.1,204.0 923.6,214.8 922.7,214.6"/><polygon points="921.9,161.3 922.9,161.5 924.0,169.2 923.0,169.0"/><polygon points="923.9,161.6 924.8,161.8 925.8,169.6 924.9,169.4"/><polygon points="924.9,182.9 925.8,183.1 927.1,192.4 926.2,192.2"/><polygon points="926.8,183.3 927.7,183.5 929.0,192.8 928.0,192.6"/><polygon points="928.0,205.3 928.9,205.5 930.4,216.4 929.4,216.2"/><polygon points="929.8,205.8 930.7,206.0 932.2,216.8 931.3,216.6"/><polygon points="931.0,162.9 932.0,163.1 933.0,170.9 932.0,170.7"/><polygon points="933.0,163.3 934.0,163.5 935.0,171.3 934.0,171.1"/><polygon points="933.8,184.7 934.8,184.9 936.0,194.3 935.0,194.1"/><polygon points="935.8,185.1 936.7,185.3 937.9,194.7 937.0,194.5"/><polygon points="936.8,207.3 937.7,207.5 939.1,218.4 938.2,218.2"/><polygon points="938.7,207.7 939.6,208.0 941.0,218.9 940.1,218.7"/><polygon points="940.3,164.6 941.3,164.8 942.3,172.7 941.2,172.5"/><polygon points="942.3,165.0 943.4,165.2 944.3,173.1 943.3,172.9"/><polygon points="943.0,186.6 944.0,186.8 945.1,196.2 944.1,196.0"/><polygon points="945.0,187.0 946.0,187.2 947.2,196.7 946.2,196.4"/><polygon points="945.8,209.3 946.8,209.6 948.1,220.6 947.1,220.3"/><polygon points="947.8,209.8 948.8,210.0 950.1,221.0 949.1,220.8"/><polygon points="949.8,166.4 950.9,166.6 951.8,174.5 950.7,174.3"/><polygon points="951.9,166.8 953.0,167.0 953.9,174.9 952.8,174.7"/><polygon points="952.4,188.5 953.4,188.7 954.5,198.2 953.5,198.0"/><polygon points="954.5,188.9 955.5,189.2 956.6,198.7 955.6,198.4"/><polygon points="955.0,211.4 956.1,211.7 957.4,222.7 956.3,222.5"/><polygon points="957.1,211.9 958.2,212.1 959.4,223.2 958.4,223.0"/><polygon points="959.6,168.2 960.7,168.4 961.6,176.4 960.5,176.1"/><polygon points="961.8,168.6 962.9,168.8 963.8,176.8 962.7,176.6"/><polygon points="962.0,190.5 963.1,190.7 964.2,200.3 963.1,200.0"/><polygon points="964.2,190.9 965.3,191.1 966.3,200.7 965.2,200.5"/><polygon points="964.5,213.6 965.6,213.8 966.8,225.0 965.8,224.7"/><polygon points="966.7,214.0 967.8,214.3 969.0,225.5 967.9,225.2"/><polygon points="969.6,170.0 970.8,170.2 971.6,178.3 970.4,178.0"/><polygon points="971.9,170.4 973.1,170.7 973.9,178.7 972.7,178.5"/><polygon points="971.9,192.5 973.1,192.7 974.0,202.4 972.9,202.1"/><polygon points="974.2,193.0 975.3,193.2 976.3,202.8 975.2,202.6"/><polygon points="974.3,215.8 975.4,216.0 976.6,227.2 975.5,227.0"/><polygon points="976.6,216.3 977.7,216.5 978.8,227.8 977.7,227.5"/><polygon points="979.9,171.9 981.1,172.1 981.9,180.2 980.7,180.0"/><polygon points="982.3,172.4 983.5,172.6 984.3,180.7 983.1,180.5"/><polygon points="982.1,194.6 983.3,194.8 984.2,204.5 983.0,204.3"/><polygon points="984.5,195.0 985.7,195.3 986.6,205.0 985.4,204.8"/><polygon points="984.3,218.0 985.5,218.3 986.6,229.6 985.4,229.3"/><polygon points="986.7,218.5 987.8,218.8 988.9,230.1 987.7,229.9"/><polygon points="990.5,173.9 991.8,174.1 992.5,182.2 991.2,182.0"/><polygon points="993.0,174.3 994.3,174.5 995.0,182.7 993.7,182.5"/><polygon points="992.5,196.7 993.8,196.9 994.6,206.7 993.4,206.5"/><polygon points="995.0,197.2 996.2,197.4 997.1,207.2 995.8,207.0"/><polygon points="994.6,220.3 995.8,220.6 996.8,232.0 995.6,231.7"/><polygon points="997.1,220.9 998.3,221.1 999.2,232.6 998.0,232.3"/><polygon points="1001.4,175.8 1002.7,176.1 1003.3,184.3 1002.0,184.1"/><polygon points="1004.0,176.3 1005.3,176.6 1005.9,184.8 1004.6,184.6"/><polygon points="1003.2,198.9 1004.5,199.1 1005.3,209.0 1004.0,208.7"/><polygon points="1005.8,199.4 1007.1,199.6 1007.9,209.5 1006.6,209.3"/><polygon points="1005.2,222.7 1006.4,223.0 1007.4,234.5 1006.1,234.2"/><polygon points="1007.7,223.3 1009.0,223.5 1009.9,235.1 1008.6,234.8"/><polygon points="1012.5,177.9 1013.9,178.1 1014.5,186.4 1013.2,186.2"/><polygon points="1015.3,178.4 1016.6,178.6 1017.2,187.0 1015.9,186.7"/><polygon points="1014.2,201.1 1015.6,201.4 1016.3,211.3 1015.0,211.0"/><polygon points="1016.9,201.6 1018.3,201.9 1019.0,211.9 1017.6,211.6"/><polygon points="1016.0,225.1 1017.3,225.4 1018.2,237.0 1016.9,236.7"/><polygon points="1018.7,225.7 1020.0,226.0 1020.8,237.7 1019.5,237.3"/><polygon points="1024.0,180.0 1025.4,180.3 1026.0,188.6 1024.5,188.4"/><polygon points="1026.8,180.5 1028.2,180.8 1028.8,189.2 1027.4,188.9"/><polygon points="1025.5,203.4 1026.9,203.7 1027.6,213.7 1026.2,213.4"/><polygon points="1028.3,204.0 1029.7,204.2 1030.4,214.3 1029.0,214.0"/><polygon points="1027.2,227.6 1028.5,227.9 1029.3,239.7 1027.9,239.3"/><polygon points="1029.9,228.2 1031.3,228.6 1032.0,240.3 1030.7,240.0"/><polygon points="1035.8,182.1 1037.2,182.4 1037.7,190.9 1036.2,190.6"/><polygon points="1038.7,182.7 1040.2,183.0 1040.6,191.4 1039.2,191.1"/><polygon points="1037.1,205.8 1038.6,206.0 1039.2,216.2 1037.7,215.9"/><polygon points="1040.0,206.3 1041.5,206.6 1042.1,216.8 1040.6,216.5"/><polygon points="1038.6,230.2 1040.0,230.5 1040.7,242.3 1039.3,242.0"/><polygon points="1041.4,230.8 1042.9,231.2 1043.5,243.0 1042.1,242.7"/><polygon points="1047.8,184.4 1049.4,184.6 1049.8,193.2 1048.3,192.9"/><polygon points="1050.9,184.9 1052.4,185.2 1052.8,193.7 1051.3,193.4"/><polygon points="1049.0,208.2 1050.6,208.5 1051.1,218.7 1049.6,218.4"/><polygon points="1052.1,208.8 1053.6,209.1 1054.1,219.3 1052.6,219.0"/><polygon points="1050.3,232.8 1051.8,233.2 1052.4,245.1 1050.9,244.7"/><polygon points="1053.3,233.5 1054.8,233.8 1055.4,245.8 1053.9,245.4"/><polygon points="1060.2,186.6 1061.8,186.9 1062.2,195.5 1060.6,195.2"/><polygon points="1063.4,187.2 1065.0,187.5 1065.4,196.1 1063.8,195.8"/><polygon points="1061.3,210.7 1062.8,211.0 1063.3,221.3 1061.7,221.0"/><polygon points="1064.4,211.3 1066.0,211.6 1066.4,222.0 1064.8,221.6"/><polygon points="1062.4,235.5 1063.9,235.9 1064.4,247.9 1062.9,247.6"/><polygon points="1065.5,236.2 1067.0,236.6 1067.5,248.6 1066.0,248.3"/><polygon points="1072.9,189.0 1074.6,189.3 1074.9,197.9 1073.3,197.6"/><polygon points="1076.3,189.6 1077.9,189.9 1078.2,198.6 1076.6,198.3"/><polygon points="1073.8,213.2 1075.5,213.5 1075.8,224.0 1074.2,223.6"/><polygon points="1077.1,213.9 1078.7,214.2 1079.1,224.6 1077.5,224.3"/><polygon points="1074.7,238.3 1076.3,238.7 1076.8,250.8 1075.2,250.4"/><polygon points="1078.0,239.1 1079.6,239.4 1080.0,251.6 1078.4,251.2"/><polygon points="1106.6,195.1 1108.3,195.5 1108.5,204.3 1106.7,204.0"/><polygon points="1110.1,195.8 1111.9,196.1 1112.0,205.0 1110.3,204.7"/><polygon points="1107.0,220.0 1108.7,220.3 1108.9,231.0 1107.2,230.6"/><polygon points="1110.5,220.7 1112.2,221.0 1112.4,231.7 1110.6,231.3"/><polygon points="1107.4,245.7 1109.1,246.1 1109.3,258.5 1107.6,258.1"/><polygon points="1110.9,246.4 1112.6,246.8 1112.8,259.3 1111.0,258.9"/><polygon points="1122.7,198.1 1124.0,198.3 1124.0,207.3 1122.8,207.1"/><polygon points="1125.2,198.6 1126.4,198.8 1126.5,207.8 1125.3,207.5"/><polygon points="1122.9,223.2 1124.1,223.4 1124.2,234.2 1123.0,234.0"/><polygon points="1125.4,223.7 1126.6,223.9 1126.6,234.7 1125.4,234.5"/><polygon points="1123.1,249.2 1124.3,249.5 1124.4,262.0 1123.2,261.7"/><polygon points="1125.5,249.7 1126.7,250.0 1126.8,262.6 1125.6,262.3"/></g><g stroke="#6e2c16" stroke-width="0.8"><path d="M1091.5 170.2 L1091.5 261.5"/><path d="M1136.5 178 V268.5"/></g><g fill="#262626" clip-path="url(#rfc)"><polygon points="1166.0,137.6 1173.2,135.7 1173.2,176.0 1166.0,178.4"/><polygon points="1177.3,134.6 1184.5,132.7 1184.5,172.2 1177.3,174.6"/><polygon points="1178.3,181.3 1183.5,179.5 1183.5,239.0 1178.3,241.3"/><polygon points="1188.6,131.6 1195.8,129.6 1195.8,168.5 1188.6,170.9"/><polygon points="1189.6,177.4 1194.8,175.7 1194.8,234.0 1189.6,236.3"/><polygon points="1201.5,125.9 1207.3,124.3 1207.3,228.5 1201.5,231.0"/><polygon points="1210.7,123.4 1216.5,121.9 1216.5,224.4 1210.7,227.0"/><polygon points="1219.9,121.0 1225.7,119.5 1225.7,220.4 1219.9,222.9"/><polygon points="1229.1,118.6 1234.9,117.1 1234.9,216.3 1229.1,218.9"/><polygon points="1238.3,116.2 1244.1,114.7 1244.1,212.2 1238.3,214.8"/><polygon points="1247.5,113.8 1253.3,112.3 1253.3,208.2 1247.5,210.7"/><polygon points="1256.7,111.4 1262.5,109.8 1262.5,204.1 1256.7,206.7"/><polygon points="1265.9,109.0 1271.7,107.4 1271.7,200.0 1265.9,202.6"/><polygon points="1275.0,106.6 1280.4,105.1 1280.4,181.5 1275.0,183.7"/><polygon points="1283.0,104.5 1288.4,103.0 1288.4,178.2 1283.0,180.4"/><polygon points="1291.0,102.4 1296.4,100.9 1296.4,174.9 1291.0,177.1"/></g><g fill="#3b3e42" clip-path="url(#rfc)"><polygon points="1201.5,125.9 1207.3,124.3 1207.3,146.7 1201.5,148.5"/><polygon points="1201.5,166.6 1207.3,164.7 1207.3,175.8 1201.5,177.9"/><polygon points="1201.5,196.0 1207.3,193.8 1207.3,202.7 1201.5,205.0"/><polygon points="1210.7,123.4 1216.5,121.9 1216.5,144.0 1210.7,145.7"/><polygon points="1210.7,163.5 1216.5,161.6 1216.5,172.6 1210.7,174.7"/><polygon points="1210.7,192.5 1216.5,190.3 1216.5,199.1 1210.7,201.4"/><polygon points="1219.9,121.0 1225.7,119.5 1225.7,141.2 1219.9,142.9"/><polygon points="1219.9,160.5 1225.7,158.5 1225.7,169.4 1219.9,171.4"/><polygon points="1219.9,189.0 1225.7,186.7 1225.7,195.4 1219.9,197.7"/><polygon points="1229.1,118.6 1234.9,117.1 1234.9,138.4 1229.1,140.2"/><polygon points="1229.1,157.4 1234.9,155.5 1234.9,166.2 1229.1,168.2"/><polygon points="1229.1,185.4 1234.9,183.2 1234.9,191.8 1229.1,194.1"/><polygon points="1238.3,116.2 1244.1,114.7 1244.1,135.7 1238.3,137.4"/><polygon points="1238.3,154.4 1244.1,152.4 1244.1,162.9 1238.3,165.0"/><polygon points="1238.3,181.9 1244.1,179.7 1244.1,188.1 1238.3,190.4"/><polygon points="1247.5,113.8 1253.3,112.3 1253.3,132.9 1247.5,134.6"/><polygon points="1247.5,151.3 1253.3,149.4 1253.3,159.7 1247.5,161.7"/><polygon points="1247.5,178.4 1253.3,176.2 1253.3,184.4 1247.5,186.8"/><polygon points="1256.7,111.4 1262.5,109.8 1262.5,130.1 1256.7,131.9"/><polygon points="1256.7,148.3 1262.5,146.3 1262.5,156.5 1256.7,158.5"/><polygon points="1256.7,174.9 1262.5,172.7 1262.5,180.8 1256.7,183.1"/><polygon points="1265.9,109.0 1271.7,107.4 1271.7,127.3 1265.9,129.1"/><polygon points="1265.9,145.2 1271.7,143.3 1271.7,153.2 1265.9,155.3"/><polygon points="1265.9,171.4 1271.7,169.2 1271.7,177.1 1265.9,179.4"/></g><g fill="#c8c4c4" opacity="0.85" clip-path="url(#rfc)"><polygon points="1202.7,150.4 1203.9,150.0 1203.9,163.5 1202.7,163.9"/><polygon points="1204.9,149.7 1206.1,149.3 1206.1,162.8 1204.9,163.2"/><polygon points="1202.7,179.7 1203.9,179.3 1203.9,192.8 1202.7,193.3"/><polygon points="1204.9,178.9 1206.1,178.5 1206.1,192.0 1204.9,192.4"/><polygon points="1202.7,206.8 1203.9,206.3 1203.9,226.6 1202.7,227.1"/><polygon points="1204.9,205.9 1206.1,205.4 1206.1,225.6 1204.9,226.2"/><polygon points="1211.9,147.6 1213.1,147.2 1213.1,160.5 1211.9,160.9"/><polygon points="1214.1,146.9 1215.3,146.5 1215.3,159.8 1214.1,160.2"/><polygon points="1211.9,176.5 1213.1,176.0 1213.1,189.3 1211.9,189.8"/><polygon points="1214.1,175.7 1215.3,175.2 1215.3,188.5 1214.1,189.0"/><polygon points="1211.9,203.1 1213.1,202.6 1213.1,222.6 1211.9,223.1"/><polygon points="1214.1,202.2 1215.3,201.8 1215.3,221.6 1214.1,222.2"/><polygon points="1221.1,144.8 1222.3,144.4 1222.3,157.5 1221.1,157.9"/><polygon points="1223.3,144.1 1224.5,143.7 1224.5,156.8 1223.3,157.2"/><polygon points="1221.1,173.2 1222.3,172.8 1222.3,185.9 1221.1,186.3"/><polygon points="1223.3,172.4 1224.5,172.0 1224.5,185.0 1223.3,185.5"/><polygon points="1221.1,199.4 1222.3,198.9 1222.3,218.6 1221.1,219.1"/><polygon points="1223.3,198.5 1224.5,198.1 1224.5,217.6 1223.3,218.1"/><polygon points="1230.3,142.0 1231.5,141.6 1231.5,154.5 1230.3,154.9"/><polygon points="1232.5,141.3 1233.7,140.9 1233.7,153.8 1232.5,154.1"/><polygon points="1230.3,169.9 1231.5,169.5 1231.5,182.4 1230.3,182.8"/><polygon points="1232.5,169.1 1233.7,168.7 1233.7,181.5 1232.5,182.0"/><polygon points="1230.3,195.7 1231.5,195.3 1231.5,214.6 1230.3,215.1"/><polygon points="1232.5,194.9 1233.7,194.4 1233.7,213.6 1232.5,214.1"/><polygon points="1239.5,139.2 1240.7,138.8 1240.7,151.5 1239.5,151.9"/><polygon points="1241.7,138.5 1242.9,138.1 1242.9,150.7 1241.7,151.1"/><polygon points="1239.5,166.7 1240.7,166.2 1240.7,178.9 1239.5,179.4"/><polygon points="1241.7,165.9 1242.9,165.5 1242.9,178.1 1241.7,178.5"/><polygon points="1239.5,192.0 1240.7,191.6 1240.7,210.6 1239.5,211.1"/><polygon points="1241.7,191.2 1242.9,190.7 1242.9,209.6 1241.7,210.1"/><polygon points="1248.7,136.4 1249.9,136.0 1249.9,148.4 1248.7,148.8"/><polygon points="1250.9,135.7 1252.1,135.3 1252.1,147.7 1250.9,148.1"/><polygon points="1248.7,163.4 1249.9,163.0 1249.9,175.4 1248.7,175.9"/><polygon points="1250.9,162.6 1252.1,162.2 1252.1,174.6 1250.9,175.0"/><polygon points="1248.7,188.4 1249.9,187.9 1249.9,206.6 1248.7,207.1"/><polygon points="1250.9,187.5 1252.1,187.0 1252.1,205.6 1250.9,206.1"/><polygon points="1257.9,133.5 1259.1,133.2 1259.1,145.4 1257.9,145.8"/><polygon points="1260.1,132.9 1261.3,132.5 1261.3,144.7 1260.1,145.1"/><polygon points="1257.9,160.1 1259.1,159.7 1259.1,171.9 1257.9,172.4"/><polygon points="1260.1,159.3 1261.3,158.9 1261.3,171.1 1260.1,171.6"/><polygon points="1257.9,184.7 1259.1,184.2 1259.1,202.5 1257.9,203.1"/><polygon points="1260.1,183.8 1261.3,183.3 1261.3,201.6 1260.1,202.1"/><polygon points="1267.1,130.7 1268.3,130.4 1268.3,142.4 1267.1,142.8"/><polygon points="1269.3,130.1 1270.5,129.7 1270.5,141.7 1269.3,142.1"/><polygon points="1267.1,156.9 1268.3,156.4 1268.3,168.5 1267.1,168.9"/><polygon points="1269.3,156.1 1270.5,155.7 1270.5,167.6 1269.3,168.1"/><polygon points="1267.1,181.0 1268.3,180.5 1268.3,198.5 1267.1,199.1"/><polygon points="1269.3,180.1 1270.5,179.6 1270.5,197.6 1269.3,198.1"/></g><g stroke="#6e2c16" stroke-width="0.8" fill="none"><path d="M1164 136 V180"/><path d="M1199.7 127 V240"/><path d="M1273 106 V210"/><path d="M1297.6 100 V200"/></g><g stroke="#f0f0f0" stroke-width="3.1" fill="none" stroke-linecap="round"><path d="M886.5 165.4 L1136.5 212 L1308.7 150"/><path d="M890.6 188.4 L1136.5 240.2 L1306 169.7"/></g><g stroke="#777" stroke-width="0.7" fill="none"><path d="M886.5 167 L1136.5 213.6 L1308.7 151.6"/><path d="M890.6 190 L1136.5 241.8 L1306 171.3"/></g><polygon points="1151,234 1172,228 1173,232 1152,238" fill="#1e1e1e" stroke="#888" stroke-width="0.5"/><polygon points="1262,185 1281,180 1282,183 1263,188" fill="#1e1e1e" stroke="#888" stroke-width="0.5"/><polygon points="927,196 944,199 944,202 927,199" fill="#1e1e1e" stroke="#888" stroke-width="0.5"/><path d="M1112 210 V196" stroke="#2020ff" stroke-width="1.2"/><path d="M1112 210 L1122 208" stroke="#20c020" stroke-width="1.2"/><path d="M1112 210 L1104 213" stroke="#ff2020" stroke-width="1.2"/></svg>
<div class="a" style="left:670px;top:460px;width:970px;height:381px;background:#fff;border-radius:3px 3px 0 0;"></div>
<div class="a" style="left:670px;top:460px;width:970px;height:37px;background:#555555;border-radius:3px 3px 0 0;"></div>
<div class="a" style="left:1155px;top:466px;width:42px;height:3px;background:#3a97b5;"></div>
<svg class="a" style="left:674px;top:469px;" width="22" height="20" viewBox="0 0 22 20"><g fill="#e3e3e3"><rect x="4" y="4.6" width="12.5" height="1.5"/><rect x="4" y="8.6" width="12.5" height="1.5"/><rect x="4" y="12.6" width="10.5" height="1.5"/><path d="M14.6 13 L18.4 15.2 L14.6 17.4Z"/></g></svg>
<div class="t" style="left:701.60px;top:472.93px;font-size:14.5px;color:#e8e8e8;font-weight:400;letter-spacing:-0.1px;">Атрибутивная проверка</div>
<svg class="a" style="left:1548px;top:470px;" width="20" height="20" viewBox="0 0 20 20"><g fill="#e3e3e3"><rect x="3" y="2.2" width="13.5" height="1.6"/><rect x="3" y="16.6" width="13.5" height="1.6"/><rect x="9" y="5" width="1.5" height="10.5"/><path d="M6.4 7.6 L9.75 4.2 L13.1 7.6Z M6.4 12.8 L9.75 16.2 L13.1 12.8Z"/></g></svg>
<svg class="a" style="left:1578px;top:470px;" width="20" height="20" viewBox="0 0 20 20"><g fill="#e3e3e3"><rect x="3.4" y="7.8" width="13.2" height="2"/><rect x="3.4" y="10.4" width="13.2" height="2"/><rect x="3.4" y="9.8" width="13.2" height="0.6" opacity="0.75"/><rect x="9.25" y="1.2" width="1.5" height="5.5"/><rect x="9.25" y="13.8" width="1.5" height="5.5"/><path d="M6.8 4.4 L10 7.4 L13.2 4.4Z M6.8 16.2 L10 13.2 L13.2 16.2Z"/></g></svg>
<svg class="a" style="left:1607px;top:470.5px;" width="22" height="22" viewBox="0 0 22 22"><path fill="#e3e3e3" fill-rule="evenodd" d="M9.4 1.8 h3.2 l0.5 2.6 a7 7 0 0 1 2 1.15 l2.5-0.85 1.6 2.75 -2 1.75 a7 7 0 0 1 0 2.3 l2 1.75 -1.6 2.75 -2.5-0.85 a7 7 0 0 1 -2 1.15 l-0.5 2.6 h-3.2 l-0.5-2.6 a7 7 0 0 1 -2-1.15 l-2.5 0.85 -1.6-2.75 2-1.75 a7 7 0 0 1 0-2.3 l-2-1.75 1.6-2.75 2.5 0.85 a7 7 0 0 1 2-1.15 z M11 8 a3 3 0 1 0 0.01 0z"/></svg>
<div class="a" style="left:734px;top:497px;width:906px;height:32px;background:#6a6a6a;"></div>
<div class="a" style="left:1416px;top:497px;width:1px;height:128px;background:#5a5a5a;"></div>
<div class="a" style="left:1612px;top:497px;width:1px;height:128px;background:#5a5a5a;"></div>
<div class="a" style="left:670px;top:497px;width:64px;height:32px;background:#fff;"></div>
<div class="a" style="left:690.7px;top:505px;width:14.5px;height:15.5px;background:#fff;border:1.6px solid #5a5a5a;border-radius:2.5px;"></div>
<div class="t" style="left:751.00px;top:507.26px;font-size:12.1px;color:#ebebeb;font-weight:700;letter-spacing:-0.6px;">Правило</div>
<div class="t" style="left:1433.00px;top:507.26px;font-size:12.1px;color:#ebebeb;font-weight:700;letter-spacing:-0.1px;">Статус</div>
<div class="t" style="left:1628.00px;top:507.26px;font-size:12.1px;color:#ebebeb;font-weight:700;letter-spacing:-0.1px;">Во</div>
<div class="a" style="left:734px;top:560px;width:906px;height:1px;background:#dcdcdc;"></div>
<div class="a" style="left:670px;top:529px;width:64px;height:32px;background:#ffa3a3;"></div>
<div class="a" style="left:670px;top:560px;width:64px;height:1px;background:#f19494;"></div>
<div class="a" style="left:690.7px;top:537px;width:14.5px;height:15.5px;background:transparent;border:1.6px solid #5b3838;border-radius:2.5px;"></div>
<div class="t" style="left:779.60px;top:538.02px;font-size:13.8px;color:#1c1c1c;font-weight:700;letter-spacing:-0.3px;">Правило: IFC-схема</div>
<svg class="a" style="left:760px;top:542px;" width="10" height="7" viewBox="0 0 10 7"><path d="M0.3 6 H9.7 L5 0.8Z" fill="#7a7a7a"/></svg>
<div class="t" style="left:1433.00px;top:538.02px;font-size:13.8px;color:#2a2a2a;font-weight:400;letter-spacing:0.19px;">Проверка не пройдена</div>
<div class="t" style="left:1628.00px;top:538.02px;font-size:13.8px;color:#2a2a2a;font-weight:400;letter-spacing:0px;">4/</div>
<div class="a" style="left:734px;top:592px;width:906px;height:1px;background:#dcdcdc;"></div>
<div class="a" style="left:670px;top:561px;width:64px;height:32px;background:#ffa3a3;"></div>
<div class="a" style="left:670px;top:592px;width:64px;height:1px;background:#f19494;"></div>
<div class="a" style="left:690.7px;top:569px;width:14.5px;height:15.5px;background:transparent;border:1.6px solid #5b3838;border-radius:2.5px;"></div>
<div class="t" style="left:779.60px;top:570.02px;font-size:13.8px;color:#1c1c1c;font-weight:700;letter-spacing:-0.38px;">Правило: контроль атрибутов</div>
<svg class="a" style="left:760px;top:576px;" width="10" height="7" viewBox="0 0 10 7"><path d="M0.3 1 H9.7 L5 6.2Z" fill="#7a7a7a"/></svg>
<div class="t" style="left:1433.00px;top:570.02px;font-size:13.8px;color:#2a2a2a;font-weight:400;letter-spacing:0.19px;">Проверка не пройдена</div>
<div class="t" style="left:1628.00px;top:570.02px;font-size:13.8px;color:#2a2a2a;font-weight:400;letter-spacing:0px;">17</div>
<div class="a" style="left:670px;top:593px;width:64px;height:32px;background:#ffa3a3;"></div>
<div class="a" style="left:670px;top:624px;width:64px;height:1px;background:#f19494;"></div>
<div class="a" style="left:690.7px;top:601px;width:14.5px;height:15.5px;background:transparent;border:1.6px solid #5b3838;border-radius:2.5px;"></div>
<div class="t" style="left:784.70px;top:602.32px;font-size:13.8px;color:#2a2a2a;font-weight:400;letter-spacing:0.13px;">'IFC_2.5_Соединительные детали трубопроводов/1. Размер' имеет значение Имеет значение</div>
<svg class="a" style="left:766px;top:606px;" width="10" height="7" viewBox="0 0 10 7"><path d="M0.3 6 H9.7 L5 0.8Z" fill="#7a7a7a"/></svg>
<div class="t" style="left:1433.00px;top:602.32px;font-size:13.8px;color:#2a2a2a;font-weight:400;letter-spacing:0.19px;">Проверка не пройдена</div>
<div class="t" style="left:1628.00px;top:602.32px;font-size:13.8px;color:#2a2a2a;font-weight:400;letter-spacing:0px;">17</div>
<div class="a" style="left:734px;top:497px;width:1px;height:128px;background:#555;"></div>
<div class="a" style="left:1640px;top:460px;width:8px;height:390px;background:#383433;"></div>
<div class="a" style="left:670px;top:841px;width:534px;height:6px;background:#3a93b2;border-radius:0 0 0 3px;"></div>
<div class="a" style="left:1204px;top:841px;width:436px;height:6px;background:#686868;"></div>
<div class="a" style="left:670px;top:847px;width:978px;height:3px;background:#383433;"></div>
<div class="a" style="left:1648px;top:37px;width:36px;height:808px;background:#535353;"></div>
<div class="a" style="left:1648px;top:128px;width:36px;height:2px;background:#3e3b3a;"></div>
<div class="a" style="left:1648px;top:397px;width:36px;height:2px;background:#3e3b3a;"></div>
<div class="a" style="left:1648px;top:446px;width:36px;height:2px;background:#3e3b3a;"></div>
<div class="a" style="left:1648px;top:627.5px;width:36px;height:2px;background:#3e3b3a;"></div>
<div class="a" style="left:1648px;top:720px;width:36px;height:2px;background:#3e3b3a;"></div>
<svg class="a" style="left:1648px;top:37px;" width="36" height="808" viewBox="0 0 36 808"><g fill="none" stroke="#e3e3e3" stroke-width="1.3"><path d="M12.5 29 H11 Q6.8 29 6.8 24.8 Q6.8 20.6 11 20.3 Q11.5 13 18.2 13 Q24.8 13 25.4 20.3 Q29.6 20.6 29.6 24.8 Q29.6 29 25.4 29 H23.6"/><path d="M18.3 17.8 V35 M18.3 27 L13.8 23.2 M18.3 25 L22.2 21.4"/></g></svg>
<svg class="a" style="left:1648px;top:37px;" width="36" height="808" viewBox="0 0 36 808"><g fill="none" stroke="#e3e3e3" stroke-width="1.2"><path d="M13.5 72.4 H5.3 V55.7 H28.6 V62"/><path d="M11 74.8 H15"/><path d="M15.2 68 V64.4 H19 M26.6 64.4 H30.9 V68 M30.9 76.8 V80.4 H26.6 M19 80.4 H15.2 V76.8"/></g><path d="M23 68.6 L26.9 70.8 V75.2 L23 77.4 L19.1 75.2 V70.8Z" fill="#e3e3e3"/></svg>
<svg class="a" style="left:1648px;top:37px;" width="36" height="808" viewBox="0 0 36 808"><g fill="none" stroke="#e3e3e3" stroke-width="1.3"><rect x="5.2" y="111.7" width="26" height="8"/></g><g fill="#e3e3e3"><rect x="4.5" y="122.6" width="27.4" height="1.6"/><rect x="8" y="115.5" width="0.9" height="3.5"/><rect x="11" y="117" width="0.9" height="2"/><rect x="13" y="115.5" width="0.9" height="3.5"/><rect x="16" y="117" width="0.9" height="2"/><rect x="18" y="115.5" width="0.9" height="3.5"/><rect x="21" y="117" width="0.9" height="2"/><rect x="23" y="115.5" width="0.9" height="3.5"/><rect x="26" y="117" width="0.9" height="2"/><rect x="28" y="115.5" width="0.9" height="3.5"/></g></svg>
<svg class="a" style="left:1648px;top:37px;" width="36" height="808" viewBox="0 0 36 808"><path d="M23.2 147.2 V165.6 L12.8 175.2 V154Z" fill="#e3e3e3"/><path d="M5 163.2 L13.2 157.6 H31.2 L22.8 163.2Z" fill="none" stroke="#e3e3e3" stroke-width="1.2"/></svg>
<svg class="a" style="left:1648px;top:37px;" width="36" height="808" viewBox="0 0 36 808"><g fill="none" stroke="#e3e3e3" stroke-width="1.1"><path d="M6.4 200.6 L11 194.4 H29.6 V209.8 L25 216 H6.4Z M6.4 200.6 H25 V216 M25 200.6 L29.6 194.4"/><path d="M14 199.5 L18.5 194.4 M14 216 L18.5 210 M20.5 200.6 L25 194.4"/></g><path d="M14 200.6 H18.6 V216 H14Z M14 200.6 L18.5 194.4 H23 L18.6 200.6Z" fill="#e3e3e3" opacity="0.9"/></svg>
<svg class="a" style="left:1648px;top:37px;" width="36" height="808" viewBox="0 0 36 808"><g fill="none" stroke="#e3e3e3" stroke-width="1.3"><path d="M6.7 240 L9 237.8 H30.6 V259.6 H6.7 V240"/><path d="M5 241.4 V261.2 H28.6"/></g><g fill="none" stroke="#e3e3e3" stroke-width="1.1" stroke-dasharray="1.6 1.4"><path d="M6.7 249.2 H30.6 M17.2 237.8 V259.6"/></g><rect x="22.5" y="254.8" width="8" height="4.5" fill="none" stroke="#e3e3e3" stroke-width="1.1"/></svg>
<svg class="a" style="left:1648px;top:37px;" width="36" height="808" viewBox="0 0 36 808"><circle cx="17.8" cy="292.7" r="7" fill="none" stroke="#e3e3e3" stroke-width="1.6"/><circle cx="17.8" cy="292.7" r="3.8" fill="#e3e3e3"/><path d="M17.8 282.8 V286 M17.8 299.4 V302.6 M7.9 292.7 H11.1 M24.5 292.7 H27.7" stroke="#e3e3e3" stroke-width="1.6"/></svg>
<svg class="a" style="left:1648px;top:37px;" width="36" height="808" viewBox="0 0 36 808"><circle cx="17.8" cy="336.6" r="12.6" fill="none" stroke="#e3e3e3" stroke-width="1.1"/><path d="M12.2 345.6 V329.2 Q15.8 327 19 329 Q21.6 330.8 24.6 329.6 V337.6 Q21.6 339 19 337.2 Q15.8 335.2 12.2 337.2" fill="none" stroke="#e3e3e3" stroke-width="1.1"/></svg>
<svg class="a" style="left:1648px;top:37px;" width="36" height="808" viewBox="0 0 36 808"><g stroke="#e3e3e3" stroke-width="1" fill="none"><path d="M3.3 390.3 L32.7 373.6 M3.3 400 L32.7 383.6 M4.5 385 L22.6 395.3 M12.6 377.6 L31.8 388.6"/></g><text x="3.5" y="381" font-size="6" fill="#e3e3e3" font-family="Liberation Sans">1</text><text x="13.5" y="374.5" font-size="6" fill="#e3e3e3" font-family="Liberation Sans">2</text></svg>
<svg class="a" style="left:1648px;top:37px;" width="36" height="808" viewBox="0 0 36 808"><rect x="6.2" y="423.3" width="24" height="24" fill="none" stroke="#e3e3e3" stroke-width="1.2" stroke-dasharray="1.6 1.4"/><g fill="none" stroke="#e3e3e3" stroke-width="1"><path d="M18 428.8 L23.8 432 V438.8 L18 442 L12.2 438.8 V432Z M12.2 432 L18 435.2 L23.8 432 M18 435.2 V442"/></g></svg>
<svg class="a" style="left:1648px;top:37px;" width="36" height="808" viewBox="0 0 36 808"><rect x="6.2" y="467" width="24" height="24" fill="none" stroke="#e3e3e3" stroke-width="1.2" stroke-dasharray="1.6 1.4"/><path d="M9.5 479 Q18.4 469.4 27.3 479 Q18.4 488.6 9.5 479Z" fill="#e3e3e3"/><circle cx="18.4" cy="479" r="3" fill="#535353"/><circle cx="18.4" cy="479" r="1.6" fill="#e3e3e3"/></svg>
<svg class="a" style="left:1648px;top:37px;" width="36" height="808" viewBox="0 0 36 808"><rect x="6.2" y="511" width="24" height="23.4" fill="none" stroke="#e3e3e3" stroke-width="1.2" stroke-dasharray="1.6 1.4"/><path d="M9.5 522.6 Q18.4 513 27.3 522.6 Q18.4 532.2 9.5 522.6Z" fill="#e3e3e3"/><circle cx="18.4" cy="522.6" r="2.8" fill="#535353"/><path d="M11 515.5 L26.5 530" stroke="#535353" stroke-width="2.6"/><path d="M11 515.5 L26.5 530" stroke="#e3e3e3" stroke-width="1"/></svg>
<svg class="a" style="left:1648px;top:37px;" width="36" height="808" viewBox="0 0 36 808"><rect x="6.2" y="555" width="23.4" height="23" fill="none" stroke="#e3e3e3" stroke-width="1.2" stroke-dasharray="1.6 1.4"/><rect x="16.1" y="564.6" width="15.7" height="16" fill="#dedede"/><path d="M19.4 568 L28.6 577.2 M28.6 568 L19.4 577.2" stroke="#535353" stroke-width="1.3"/></svg>
<div class="a" style="left:1650px;top:637px;width:32px;height:32px;background:#8a8a8a;"></div>
<div class="a" style="left:1650px;top:681px;width:32px;height:32px;background:#8a8a8a;"></div>
<svg class="a" style="left:1650px;top:637px;" width="32" height="32" viewBox="0 0 32 32"><g stroke="#ececec" stroke-width="1.6" stroke-linejoin="round"><path d="M7 7.8 L15.9 11.6 L15.9 28.6 L10.3 23.2Z" fill="#ececec"/><path d="M7 7.8 L15.9 4.4 L26.4 7.8 L15.9 11.6Z" fill="#f4f4f4"/><path d="M15.9 11.6 L26.4 7.8 L23.7 22 L15.9 28.6Z" fill="#8a8a8a"/></g></svg>
<svg class="a" style="left:1650px;top:681px;" width="32" height="32" viewBox="0 0 32 32"><g fill="none" stroke="#e3e3e3" stroke-width="2"><ellipse cx="16" cy="16" rx="11.5" ry="6.2"/><ellipse cx="16" cy="16" rx="6.2" ry="11.5"/></g><path d="M16 13 V16.5 L13 19.5 M16 16.5 L19 19.5" stroke="#e3e3e3" stroke-width="1" fill="none"/></svg>
<svg class="a" style="left:1650px;top:837px;" width="8" height="8" viewBox="0 0 8 8"><path d="M0.5 1 L6.5 6.5 H0.5Z" fill="#f0f0f0"/></svg>
<svg class="a" style="left:0;top:0" width="1688" height="850"><defs><filter id="sh" x="-30%" y="-30%" width="160%" height="160%"><feGaussianBlur stdDeviation="1.8"/></filter></defs><g transform="translate(2.5,3)" filter="url(#sh)" opacity="0.7"><path d="M697.7 655.5 L750.4 591.9" stroke="#505050" stroke-width="3" fill="none"/><polygon points="759.7,580.8 745,587.5 755.7,596.2" fill="#505050"/><path d="M768.4 694.7 L814.0 630.6" stroke="#505050" stroke-width="3" fill="none"/><polygon points="822.4,620.8 808.1,628.5 820,632.8" fill="#505050"/></g><path d="M697.7 655.5 L750.4 591.9" stroke="#c00010" stroke-width="3" fill="none"/><polygon points="759.7,580.8 745,587.5 755.7,596.2" fill="#c00010"/><path d="M768.4 694.7 L814.0 630.6" stroke="#c00010" stroke-width="3" fill="none"/><polygon points="822.4,620.8 808.1,628.5 820,632.8" fill="#c00010"/></svg>
</body></html>
